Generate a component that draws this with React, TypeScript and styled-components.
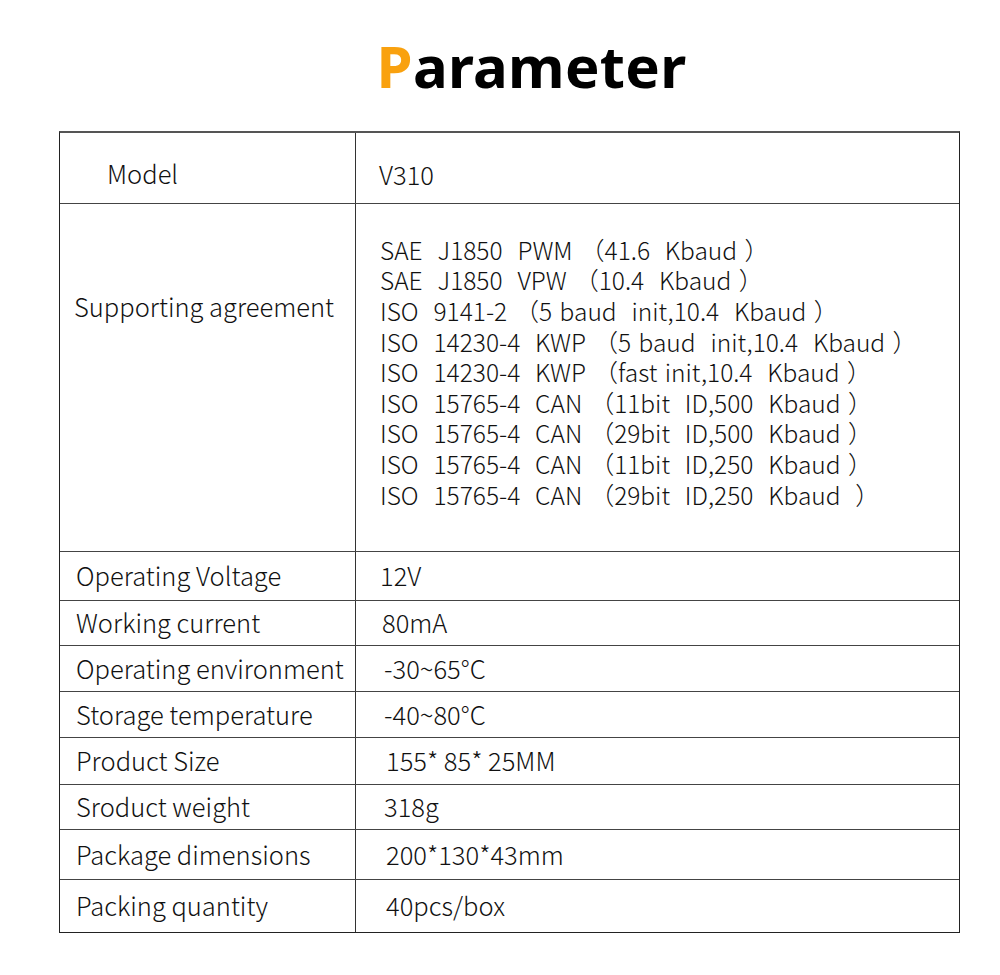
import styled, { createGlobalStyle } from "styled-components";

const GlobalStyle = createGlobalStyle`
  body {
    margin: 0;
    background: #fff;
    font-family: "Noto Sans CJK SC", "Noto Sans", sans-serif;
    font-weight: 300;
    color: #111;
  }
`;

const Page = styled.div`
  width: 1000px;
  height: 975px;
  padding-top: 26px;
  box-sizing: border-box;
`;

const Title = styled.h1`
  margin: 0 0 0 63px;
  height: 105px;
  text-align: center;
  font-family: "Noto Sans", "Open Sans", sans-serif;
  font-weight: 700;
  font-size: 58px;
  line-height: 80px;
  letter-spacing: 0.3px;
  color: #000;
`;

const Accent = styled.span`
  color: #f9a10f;
`;

const Table = styled.div`
  margin-left: 59px;
  width: 901px;
  border: 1px solid #222;
  border-top: 2px solid #555;
  box-sizing: border-box;
`;

const Row = styled.div<{ $h: number }>`
  display: grid;
  grid-template-columns: 296px 1fr;
  height: ${(p) => p.$h}px;
  border-top: 1.5px solid #444;
  box-sizing: border-box;
  &:first-child {
    border-top: none;
  }
`;

const Label = styled.div<{ $pad: number; $top?: number }>`
  display: flex;
  align-items: ${(p) => (p.$top !== undefined ? "flex-start" : "center")};
  padding-left: ${(p) => p.$pad}px;
  padding-top: ${(p) => p.$top ?? 0}px;
  padding-bottom: ${(p) => (p.$top !== undefined ? 0 : 3)}px;
  border-right: 1px solid #333;
  font-size: 25.5px;
  white-space: nowrap;
`;

const Value = styled.div<{ $pad: number }>`
  display: flex;
  align-items: center;
  padding-left: ${(p) => p.$pad}px;
  padding-bottom: 3px;
  font-size: 25.5px;
  white-space: nowrap;
`;

const ProtocolList = styled.div`
  display: flex;
  flex-direction: column;
  justify-content: center;
  padding-left: 24px;
  padding-bottom: 10px;
  font-size: 24.5px;
  line-height: 30.6px;
  word-spacing: 2px;
  white-space: pre;
`;

const protocols = [
  "SAE  J1850  PWM （41.6  Kbaud ）",
  "SAE  J1850  VPW （10.4  Kbaud ）",
  "ISO  9141-2 （5 baud  init,10.4  Kbaud ）",
  "ISO  14230-4  KWP （5 baud  init,10.4  Kbaud ）",
  "ISO  14230-4  KWP （fast init,10.4  Kbaud ）",
  "ISO  15765-4  CAN （11bit  ID,500  Kbaud ）",
  "ISO  15765-4  CAN （29bit  ID,500  Kbaud ）",
  "ISO  15765-4  CAN （11bit  ID,250  Kbaud ）",
  "ISO  15765-4  CAN （29bit  ID,250  Kbaud  ）",
];

const specs = [
  { label: "Operating Voltage", value: "12V", h: 49, vp: 24 },
  { label: "Working current", value: "80mA", h: 45, vp: 26 },
  { label: "Operating environment", value: "-30~65°C", h: 46, vp: 28 },
  { label: "Storage temperature", value: "-40~80°C", h: 46, vp: 28 },
  { label: "Product Size", value: "155* 85* 25MM", h: 47, vp: 30 },
  { label: "Sroduct weight", value: "318g", h: 45, vp: 28 },
  { label: "Package dimensions", value: "200*130*43mm", h: 50, vp: 30 },
  { label: "Packing quantity", value: "40pcs/box", h: 53, vp: 30 },
];

export default function App() {
  return (
    <Page>
      <GlobalStyle />
      <Title>
        <Accent>P</Accent>arameter
      </Title>
      <Table>
        <Row $h={70}>
          <Label $pad={47} style={{ paddingTop: 12 }}>Model</Label>
          <Value $pad={23} style={{ paddingTop: 14 }}>V310</Value>
        </Row>
        <Row $h={348}>
          <Label $pad={14} $top={83}>Supporting agreement</Label>
          <ProtocolList>
            {protocols.map((p) => (
              <span key={p}>{p}</span>
            ))}
          </ProtocolList>
        </Row>
        {specs.map((s) => (
          <Row key={s.label} $h={s.h}>
            <Label $pad={16}>{s.label}</Label>
            <Value $pad={s.vp}>{s.value}</Value>
          </Row>
        ))}
      </Table>
    </Page>
  );
}
